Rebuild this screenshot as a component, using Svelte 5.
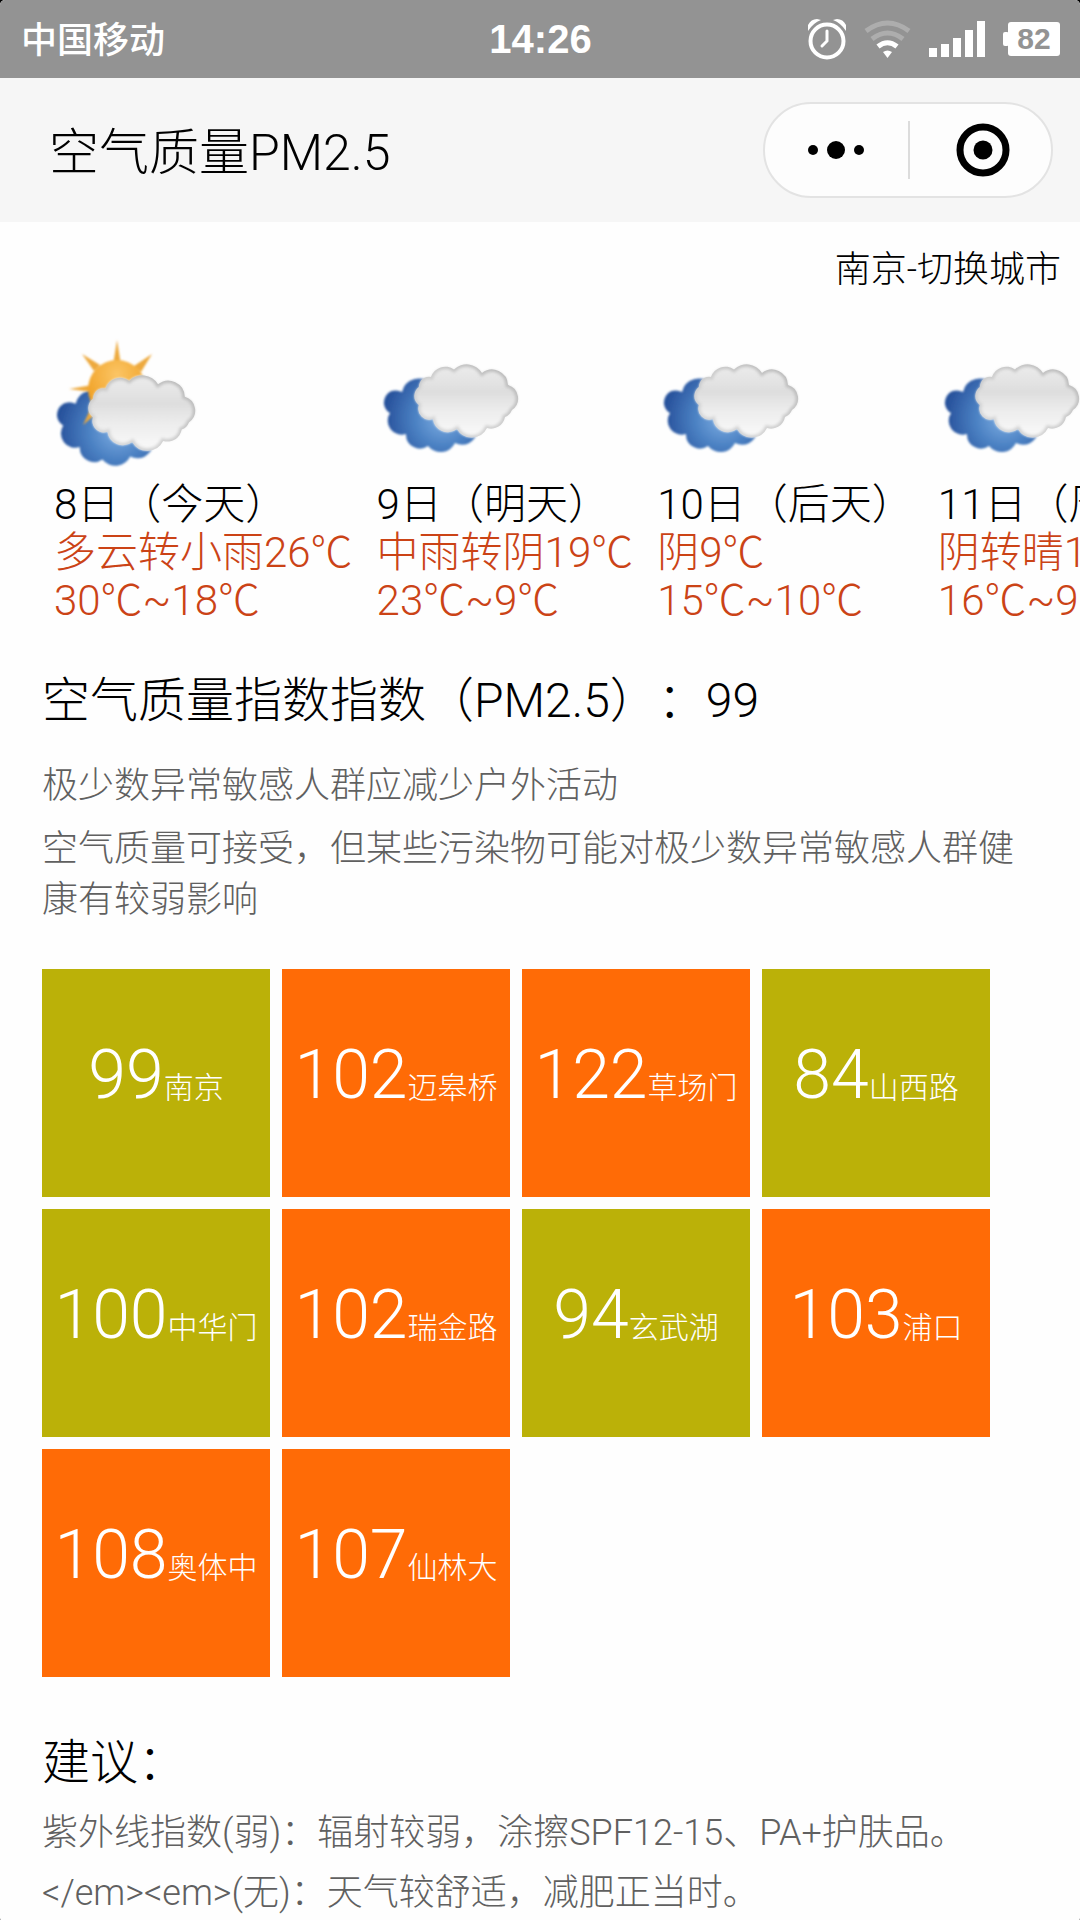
<script>
  const forecast = [
    { day: '8日（今天）', sky: '多云转小雨26℃', range: '30℃~18℃', sun: true },
    { day: '9日（明天）', sky: '中雨转阴19℃', range: '23℃~9℃', sun: false },
    { day: '10日（后天）', sky: '阴9℃', range: '15℃~10℃', sun: false },
    { day: '11日（周三）', sky: '阴转晴12℃', range: '16℃~9℃', sun: false }
  ];

  const stations = [
    { value: 99, name: '南京' },
    { value: 102, name: '迈皋桥' },
    { value: 122, name: '草场门' },
    { value: 84, name: '山西路' },
    { value: 100, name: '中华门' },
    { value: 102, name: '瑞金路' },
    { value: 94, name: '玄武湖' },
    { value: 103, name: '浦口' },
    { value: 108, name: '奥体中' },
    { value: 107, name: '仙林大' }
  ];

  const advice = [
    '紫外线指数(弱)：辐射较弱，涂擦SPF12-15、PA+护肤品。',
    '</em><em>(无)：天气较舒适，减肥正当时。'
  ];

  // The sunny icon carries its clouds lower and a little larger.
  const cloudPlace = (sun) => (sun ? 'translate(0 11) scale(1.03)' : 'translate(4 1)');
</script>

<svg class="defs" width="0" height="0" aria-hidden="true">
  <defs>
    <radialGradient id="blue" gradientUnits="userSpaceOnUse" cx="62" cy="88" r="58">
      <stop offset="0" stop-color="#7eaee3" />
      <stop offset="0.5" stop-color="#4a80c2" />
      <stop offset="1" stop-color="#28529c" />
    </radialGradient>
    <linearGradient id="white" x1="0" y1="0" x2="0" y2="1">
      <stop offset="0" stop-color="#ececec" />
      <stop offset="0.38" stop-color="#dedede" />
      <stop offset="0.65" stop-color="#ededed" />
      <stop offset="1" stop-color="#fafafa" />
    </linearGradient>
    <linearGradient id="rim" x1="0" y1="1" x2="1" y2="0">
      <stop offset="0" stop-color="#e2e2e2" />
      <stop offset="0.5" stop-color="#cccccc" />
      <stop offset="1" stop-color="#b4b4b4" />
    </linearGradient>
    <radialGradient id="sun" cx="0.5" cy="0.25" r="0.7">
      <stop offset="0" stop-color="#fbc565" />
      <stop offset="1" stop-color="#ef9c1c" />
    </radialGradient>
    <filter id="soft" x="-10%" y="-10%" width="120%" height="120%">
      <feGaussianBlur stdDeviation="1.4" />
    </filter>
    <filter id="edge" x="-10%" y="-10%" width="120%" height="120%">
      <feGaussianBlur stdDeviation="0.8" />
    </filter>
    <path
      id="white-shape"
      d="M50 47A15 15 0 0 1 73 39.500A18 18 0 0 1 101 43A16 16 0 0 1 127 55A14 14 0 0 1 131 80A12 12 0 0 1 124 87A14 14 0 0 1 106 98A17 17 0 0 1 76 99A15 15 0 0 1 52 89A11 11 0 0 1 38 75A11 11 0 0 1 38 57A10 10 0 0 1 50 47Z"
    />
    <path
      id="blue-shape"
      d="M21 62A17 17 0 0 1 50 54L96 102A15 15 0 0 1 74 113A16 16 0 0 1 47 116A14 14 0 0 1 25 104A14 14 0 0 1 9 83A12 12 0 0 1 21 62Z"
    />
    <clipPath id="white-clip"><use href="#white-shape" /></clipPath>
  </defs>
</svg>

<div class="page">
  <div class="status">
    <span class="carrier">中国移动</span>
    <time class="clock">14:26</time>
    <div class="indicators">
      <svg width="38" height="42" viewBox="0 0 38 42" aria-label="闹钟" role="img">
        <circle cx="19" cy="23" r="16.500" fill="none" stroke="#fff" stroke-width="4" />
        <path d="M19 13V23L14 28" fill="none" stroke="#fff" stroke-width="3" stroke-linecap="round" />
        <path d="M0 13V7Q3 1 9 1L13 2Q5 5 0 13ZM38 13V7Q35 1 29 1L25 2Q33 5 38 13Z" fill="#fff" />
      </svg>
      <svg width="47" height="38" viewBox="0 0 47 38" aria-label="无线网络" role="img">
        <g fill="none" stroke-width="5">
          <path d="M2 11Q23.500 -5 45 11" stroke="#adadad" />
          <path d="M8 19Q23.500 7 39 19" stroke="#adadad" />
          <path d="M14 26.500Q23.500 19 33 26.500" stroke="#fff" />
        </g>
        <path d="M19 32Q23.500 29 28 32L23.500 38Z" fill="#fff" />
      </svg>
      <svg width="56" height="36" viewBox="0 0 56 36" aria-label="信号" role="img">
        <path d="M0 27H8V36H0ZM12 23H20V36H12ZM24 17H32V36H24ZM36 9H44V36H36ZM48 0H56V36H48Z" fill="#fff" />
      </svg>
      <span class="battery">82</span>
    </div>
  </div>

  <header>
    <h1>空气质量PM2.5</h1>
    <div class="capsule">
      <button aria-label="更多">
        <svg width="58" height="20" viewBox="0 0 58 20">
          <circle cx="6" cy="10" r="5" />
          <circle cx="29" cy="10" r="9" />
          <circle cx="52" cy="10" r="5" />
        </svg>
      </button>
      <button aria-label="关闭">
        <svg width="54" height="54" viewBox="0 0 54 54">
          <circle cx="27" cy="27" r="23" fill="none" stroke="#000" stroke-width="7" />
          <circle cx="27" cy="27" r="9.500" />
        </svg>
      </button>
    </div>
  </header>

  <main>
    <a class="city" href="#city">南京-切换城市</a>

    <section class="forecast">
      {#each forecast as item}
        <article>
          <svg width="150" height="150" viewBox="0 0 150 150" aria-hidden="true">
            <g transform={cloudPlace(item.sun)}>
              <use href="#blue-shape" fill="url(#blue)" filter="url(#edge)" />
            </g>
            {#if item.sun}
              <g filter="url(#edge)">
                <path
                  d="M63 11L67 36H59ZM28 25L46 36L40 42ZM98 25L87 43L80 37ZM15 60L38 56V63ZM29 96L37 79L43 84Z"
                  fill="#eda93c"
                />
                <circle cx="63" cy="60" r="29" fill="url(#sun)" />
              </g>
            {/if}
            <g transform={cloudPlace(item.sun)}>
              <use href="#white-shape" fill="url(#white)" filter="url(#edge)" />
              <g clip-path="url(#white-clip)">
                <use href="#white-shape" fill="none" stroke="url(#rim)" stroke-width="5" filter="url(#soft)" />
              </g>
            </g>
          </svg>
          <p>{item.day}</p>
          <p class="warm">{item.sky}</p>
          <p class="warm">{item.range}</p>
        </article>
      {/each}
    </section>

    <section class="quality">
      <h2>空气质量指数指数（PM2.5）：99</h2>
      <p>极少数异常敏感人群应减少户外活动</p>
      <p>空气质量可接受，但某些污染物可能对极少数异常敏感人群健康有较弱影响</p>
    </section>

    <ul class="tiles">
      {#each stations as s}
        <li class:over={s.value > 100}><strong>{s.value}</strong>{s.name}</li>
      {/each}
    </ul>

    <section class="advice">
      <h2>建议：</h2>
      {#each advice as line}
        <p>{line}</p>
      {/each}
    </section>
  </main>
</div>

<style>
  :global(body) {
    margin: 0;
    background: #000;
  }
  .defs {
    position: absolute;
  }
  .page {
    min-height: 100vh;
    overflow: hidden;
    border-radius: 5px;
    background: #fefefe;
    color: #000;
    font-family: Roboto, 'Noto Sans CJK SC', sans-serif;
    font-weight: 300;
    text-spacing-trim: space-all;
  }
  h1,
  h2,
  p,
  ul {
    margin: 0;
    padding: 0;
    font-weight: 300;
  }
  svg {
    display: block;
  }

  .status {
    display: grid;
    grid-template-columns: 1fr auto 1fr;
    align-items: center;
    height: 78px;
    padding: 0 20px 0 21px;
    background: #939393;
    color: #fff;
  }
  .carrier {
    padding-bottom: 4px;
    font: 500 36px 'Noto Sans CJK SC', sans-serif;
  }
  .clock {
    font: bold 40px 'Liberation Sans', sans-serif;
  }
  .indicators {
    display: flex;
    justify-content: flex-end;
    align-items: center;
    gap: 18px;
  }
  .battery {
    position: relative;
    width: 52px;
    margin-left: 5px;
    border-radius: 3px;
    background: #fff;
    color: #939393;
    font: bold 30px/34px 'Liberation Sans', sans-serif;
    text-align: center;
  }
  .battery::before {
    content: '';
    position: absolute;
    left: -5px;
    top: 10px;
    width: 6px;
    height: 14px;
    border-radius: 2px;
    background: #fff;
  }

  header {
    display: flex;
    align-items: center;
    justify-content: space-between;
    height: 144px;
    padding: 0 27px 0 49px;
    background: #f6f6f6;
  }
  h1 {
    padding-bottom: 4px;
    font-size: 50px;
  }
  .capsule {
    display: flex;
    align-items: center;
    box-sizing: border-box;
    width: 290px;
    height: 96px;
    border: 2px solid #e3e3e3;
    border-radius: 48px;
    background: #fdfdfd;
  }
  .capsule button {
    display: flex;
    flex: 0 0 50%;
    align-items: center;
    justify-content: center;
    box-sizing: border-box;
    height: 58px;
    padding: 0 2px 0 0;
    border: 0;
    background: none;
  }
  .capsule button + button {
    padding: 0 0 0 4px;
    border-left: 2px solid #dcdcdc;
  }

  .city {
    display: block;
    padding: 22px 19px 0;
    color: #000;
    font-size: 36px;
    line-height: 52px;
    text-align: right;
    text-decoration: none;
  }
  .forecast {
    display: flex;
    gap: 24px;
    overflow: hidden;
    margin-top: 33px;
    padding-left: 54px;
  }
  .forecast article {
    flex: none;
  }
  .forecast svg {
    margin-bottom: 2px;
  }
  .forecast p {
    font-size: 42px;
    line-height: 48px;
    white-space: nowrap;
  }
  .forecast .warm {
    color: #cb4316;
  }

  h2 {
    font-size: 48px;
    line-height: 72px;
  }
  .quality,
  .advice {
    padding: 0 42px;
    color: #606060;
    font-size: 36px;
  }
  .quality h2,
  .advice h2 {
    color: #000;
  }
  .quality {
    padding-top: 40px;
    line-height: 51px;
  }
  .quality p {
    margin-top: 12px;
  }
  .quality h2 + p {
    margin-top: 24px;
  }
  .advice {
    padding-top: 50px;
    line-height: 60px;
  }
  .advice h2 + p {
    margin-top: 4px;
  }

  .tiles {
    display: flex;
    flex-wrap: wrap;
    gap: 12px;
    padding: 43px 42px 0;
    list-style: none;
  }
  .tiles li {
    width: 228px;
    height: 228px;
    background: #bbb108;
    color: #fff;
    font-size: 30px;
    line-height: 212px;
    text-align: center;
    white-space: nowrap;
  }
  .tiles .over {
    background: #ff6b06;
  }
  .tiles strong {
    font-size: 68px;
    font-weight: 300;
  }
</style>
